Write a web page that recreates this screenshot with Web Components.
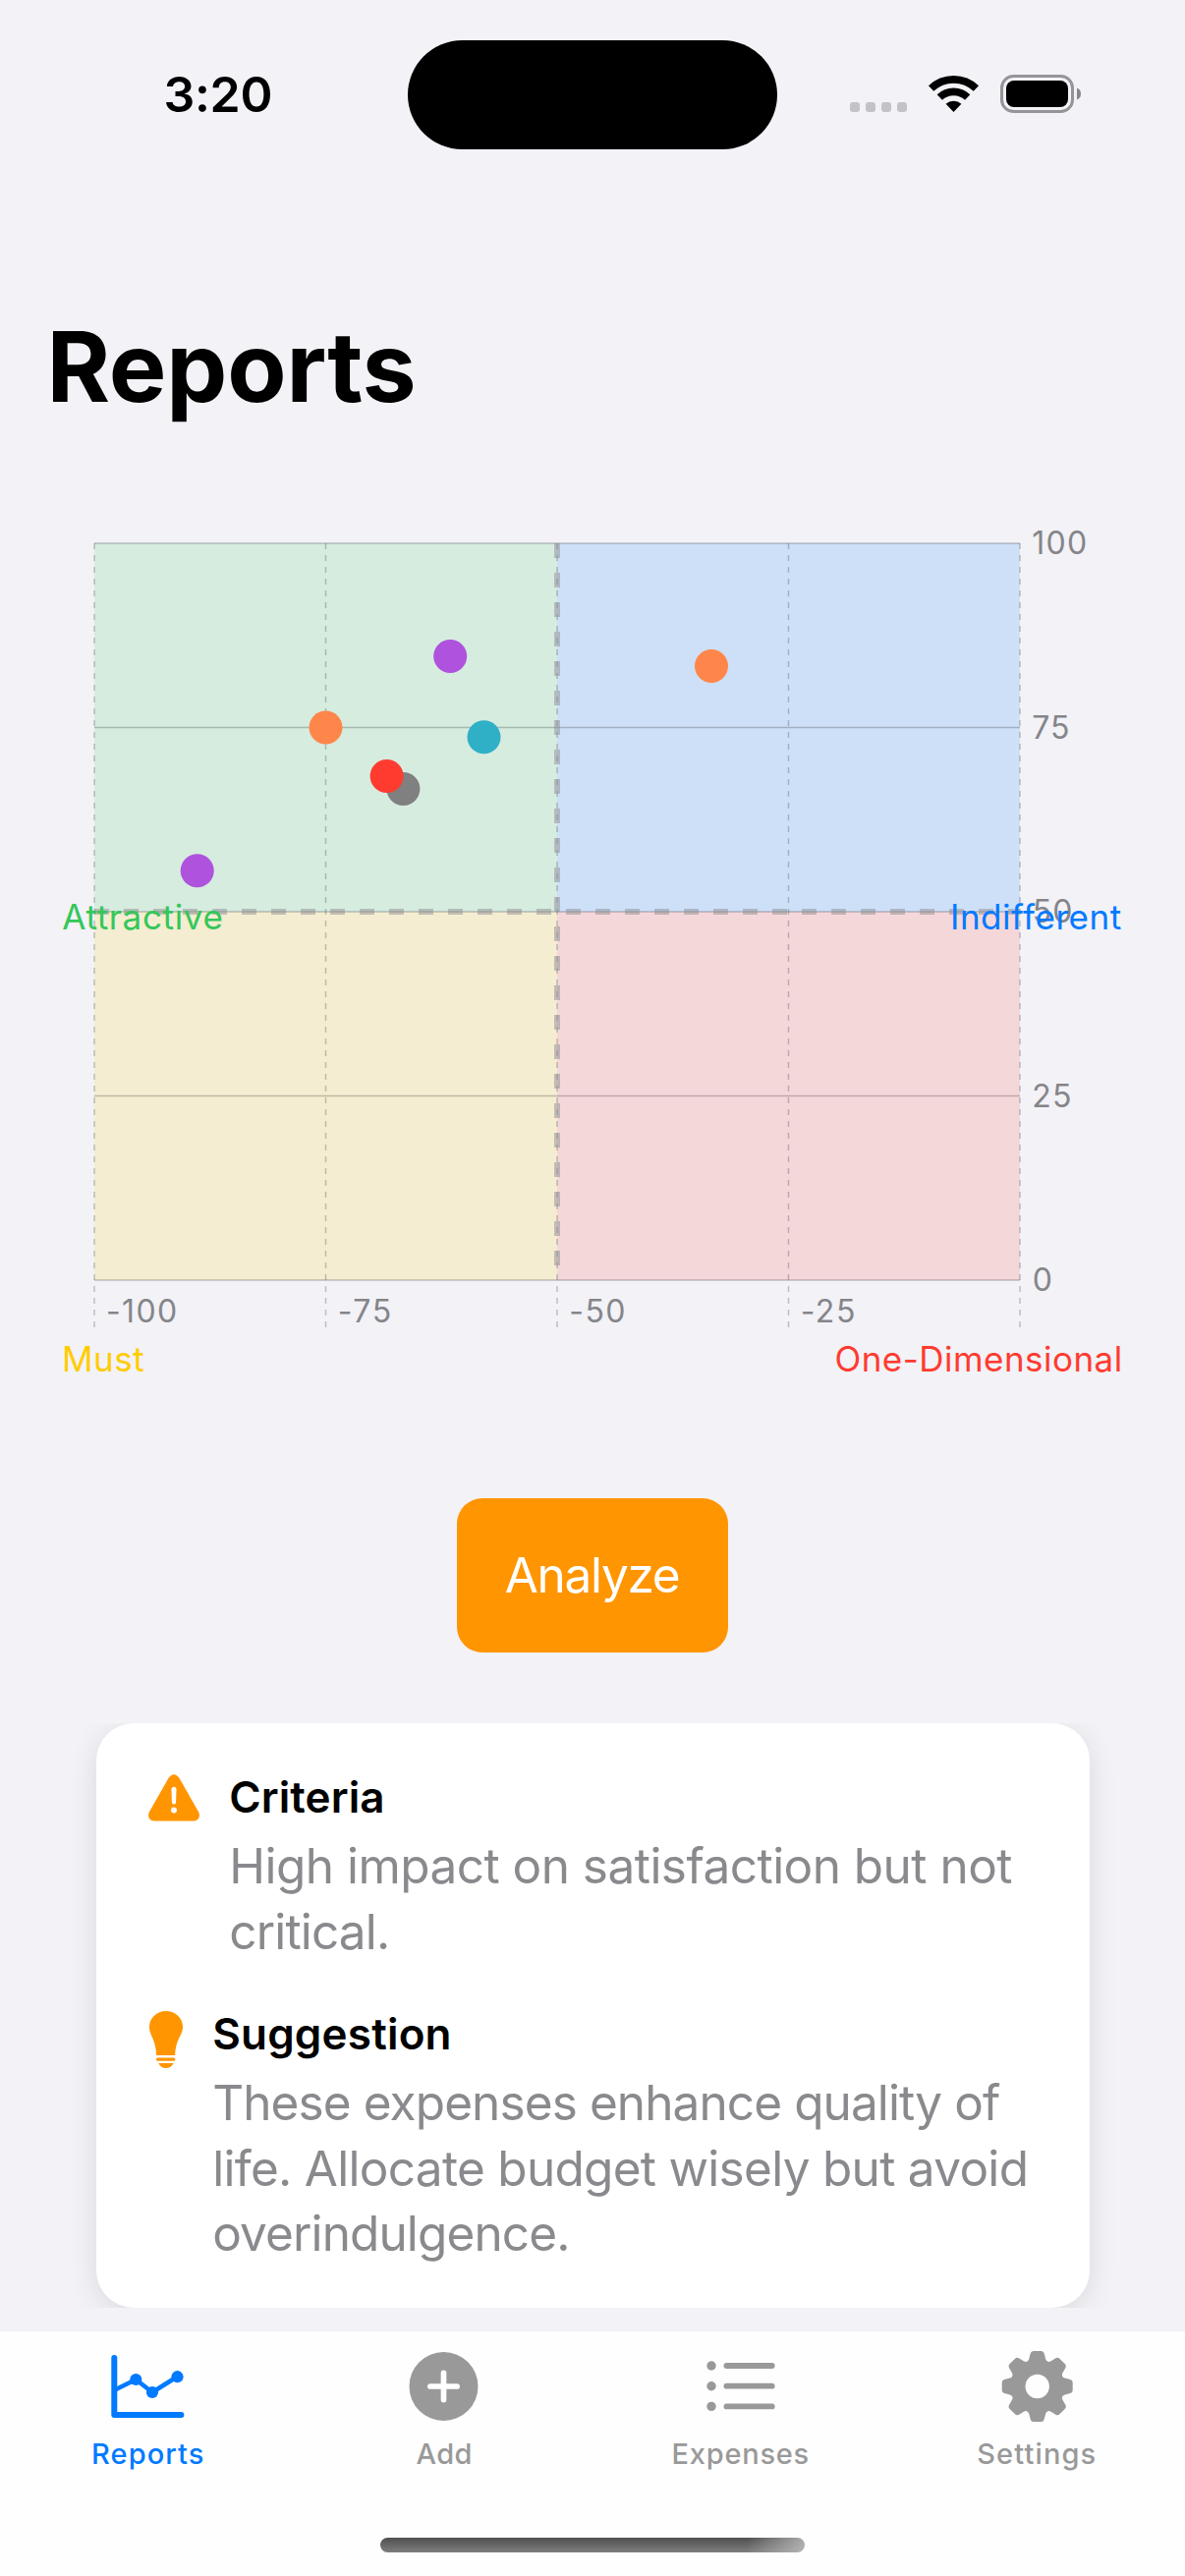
<!DOCTYPE html>
<html lang="en">
<head>
<meta charset="utf-8">
<title>Reports</title>
<style>
  body { margin: 0; background: #f2f2f7; font-family: Inter, "Liberation Sans", sans-serif; color: #000; }
</style>
</head>
<body>
<report-screen></report-screen>
<script>
const define = (name, html) => customElements.define(name, class extends HTMLElement {
  connectedCallback() {
    if (this.shadowRoot) return;
    const t = document.createElement('template');
    t.innerHTML = typeof html === 'function' ? html(this) : html;
    this.attachShadow({ mode: 'open' }).append(t.content.cloneNode(true));
  }
});

define('status-bar', `
<style>
  :host { display: grid; grid-template-columns: 415px 376px 1fr; height: 194px; align-items: center; }
  .time { padding-left: 166.5px; font-size: 50px; font-weight: 600; letter-spacing: -.34px; line-height: 60px; margin-top: -2px; }
  .island { height: 111px; margin-top: -1px; border-radius: 56px; background: #000; }
  svg { display: block; width: 260px; height: 60px; margin-left: 64px; }
</style>
<div class="time">3:20</div>
<div class="island"></div>
<svg viewBox="855 67 260 60">
  <g fill="#c3c2c7">
    <rect x="865" y="104" width="10" height="10" rx="3"/><rect x="881" y="104" width="10" height="10" rx="3"/>
    <rect x="897" y="104" width="10" height="10" rx="3"/><rect x="913" y="104" width="10" height="10" rx="3"/>
  </g>
  <g fill="none" stroke="#000">
    <path stroke-width="7.6" d="M947.6 90a33.2 33.2 0 0 1 45.8 0"/>
    <path stroke-width="7.6" d="M956.3 99.1a20.5 20.5 0 0 1 28.4 0"/>
  </g>
  <path d="M970.5 114l-7.9-8.2a11.6 11.6 0 0 1 15.8 0z"/>
  <rect x="1019.5" y="77.5" width="72" height="36" rx="12" fill="none" stroke="#949499" stroke-width="3"/>
  <rect x="1024" y="82" width="63" height="27" rx="8"/>
  <path fill="#87878b" d="M1096 89.5q4 1.5 4 6t-4 6z"/>
</svg>`);

define('page-title', `
<style>
  :host { display: block; box-sizing: border-box; height: 286px; padding: 120px 0 0 47.5px; font-size: 98.5px; font-weight: 700; line-height: 120px; letter-spacing: -.19px; }
</style><slot></slot>`);

define('kano-chart', () => {
  const xs = [96, 331.5, 567, 802.5, 1038], ys = [553, 740.5, 928, 1115.5, 1303];
  const dots = [[410.4,803,'#808080'],[393.6,790,'#ff3b30'],[458.2,668,'#af52de'],[331.5,740.5,'#ff864a'],[492.5,750.3,'#30b0c7'],[200.7,886.3,'#af52de'],[724,678,'#ff864a']];
  const line = (x1, y1, x2, y2) => `<line x1="${x1}" y1="${y1}" x2="${x2}" y2="${y2}"/>`;
  const text = (s, x, y, ls) => `<text x="${x}" y="${y}" letter-spacing="${ls}">${s}</text>`;
  return `
<style>
  :host { display: block; height: 940px; }
  svg { display: block; }
  text { font-family: Inter, "Liberation Sans", sans-serif; }
</style>
<svg width="1206" height="940" viewBox="0 480 1206 940">
  <rect x="96" y="553" width="471" height="375" fill="#d6ecdf"/>
  <rect x="567" y="553" width="471" height="375" fill="#cee0f8"/>
  <rect x="96" y="928" width="471" height="375" fill="#f4edd1"/>
  <rect x="567" y="928" width="471" height="375" fill="#f4d7d9"/>
  <g stroke="#3c3c43" stroke-opacity=".29" stroke-width="1.5">
    ${ys.map(y => line(96, y, 1038, y)).join('')}
    <g stroke-dasharray="6 6">${xs.map(x => line(x, 553, x, 1351)).join('')}</g>
  </g>
  <g font-size="32" fill="#858589">
    ${text('100', 1050.3, 564, 1.25)}${text('75', 1050.3, 751.8, .9)}${text('50', 1050.8, 939.3, 1.1)}${text('25', 1050.3, 1126.8, 1.1)}${text('0', 1050.8, 1314.2, 0)}
    ${text('-100', 108, 1346, 1.36)}${text('-75', 343.7, 1346, 1.65)}${text('-50', 579.2, 1346, 1.5)}${text('-25', 814.7, 1346, 1.52)}
  </g>
  <g stroke="#8e8e93" stroke-opacity=".5" stroke-width="6" stroke-dasharray="15 15">
    ${line(567, 553, 567, 1303)}${line(96, 928, 1038, 928)}
  </g>
  ${dots.map(([x, y, c]) => `<circle cx="${x}" cy="${y}" r="17" fill="${c}"/>`).join('')}
  <g font-size="35">
    <g fill="#34c759">${text('Attractive', 63.3, 945.7, .66)}</g>
    <g fill="#007aff">${text('Indifferent', 967, 945.7, .51)}</g>
    <g fill="#ffcc00">${text('Must', 63, 1396, .5)}</g>
    <g fill="#ff3b30">${text('One-Dimensional', 849.5, 1396, .46)}</g>
  </g>
</svg>`;
});

define('action-button', `
<style>
  :host { display: block; padding: 105px 0 72px; }
  button { display: block; width: 276px; height: 157px; margin: 0 auto; padding: 0 1px 1px 0; border: 0; border-radius: 26px; background: #ff9500; color: #fff; font: 400 49.5px/60px Inter, "Liberation Sans", sans-serif; letter-spacing: -1.3px; }
</style><button><slot></slot></button>`);

define('advice-card', `
<style>
  :host { display: block; height: 595px; overflow: hidden; }
  .card { box-sizing: border-box; width: 1011px; height: 595px; margin-left: 98px; padding: 48px 0 0 53px; background: #fff; border-radius: 38px; box-shadow: 0 6px 30px rgba(0,0,0,.1); display: flex; flex-direction: column; gap: 44px; }
</style><div class="card"><slot></slot></div>`);

define('advice-row', el => `
<style>
  :host { display: flex; }
  .icon { flex: none; width: ${el.getAttribute('icon-width')}px; padding-top: 3.5px; }
  h3 { margin: 0 0 10px; font-size: 44px; font-weight: 600; line-height: 54px; }
</style>
<div class="icon"><slot name="icon"></slot></div>
<div><h3 style="letter-spacing:${el.getAttribute('tracking')}px">${el.getAttribute('heading')}</h3><slot></slot></div>`);

define('advice-line', el => `
<style>:host { display: block; white-space: nowrap; color: #8a8a8e; font-size: 49.5px; line-height: 66.5px; letter-spacing: ${el.getAttribute('tracking')}px; }</style><slot></slot>`);

const glyphs = {
  warning: [52, 48, `<path fill="#ff9500" d="M20.7 3.5Q26 -3.5 31.3 3.5L51.2 38.5C53.2 43 50.8 47.5 46 47.5H6C1.2 47.5-1.2 43 .8 38.5Z"/><path fill="#fff" d="M23.5 15.3a2.5 2.5 0 0 1 5 0l-.4 13.2a2.1 2.1 0 0 1-4.2 0z"/><circle cx="26" cy="36.5" r="3" fill="#fff"/>`],
  bulb: [36, 58, `<g transform="translate(1 0)" fill="#ff9500"><path d="M17 0C7.5 0 0 7 0 16C0 25 6.5 28 7.2 45H26.2C26.9 28 34 25 34 16C34 7 26.5 0 17 0Z"/><rect x="7" y="47.5" width="19.3" height="3.2" rx="1.5"/><path d="M9.3 53H24.5Q22.5 58 16.9 58T9.3 53Z"/></g>`],
  chart: [90, 80, `<g fill="none" stroke="currentColor" stroke-linecap="round" stroke-linejoin="round"><path stroke-width="6" d="M-34.7 -29V29H33.4"/><path stroke-width="4.5" d="M-34 3.5L-12.7 -7L4 6L29.5 -10"/></g><g fill="currentColor"><circle cx="-12.7" cy="-7" r="6.1"/><circle cx="4" cy="6" r="6.1"/><circle cx="29.5" cy="-9.8" r="6.1"/></g>`],
  plus: [90, 80, `<g transform="translate(-.5 0)"><circle r="35" fill="currentColor"/><path stroke="#fff" stroke-width="5.7" stroke-linecap="round" d="M-13.6 0H13.6M0-13.6V13.6"/></g>`],
  list: [90, 80, `<g fill="currentColor"><circle cx="-30" cy="-21" r="4.7"/><circle cx="-30" cy="-.3" r="4.7"/><circle cx="-30" cy="20.4" r="4.7"/></g><path stroke="currentColor" stroke-width="5.8" stroke-linecap="round" d="M-14.6-21H31.7M-14.6-.3H31.7M-14.6 20.4H31.7"/>`],
  gear: [90, 80, `<g transform="translate(.7 0)"><g fill="currentColor">${[0,45,90,135,180,225,270,315].map(a => `<path transform="rotate(${a})" d="M-11.5-24.5Q-8.8-26-8.4-28L-7-33.5Q-6.4-36-4-36H4Q6.4-36 7-33.5L8.4-28Q8.8-26 11.5-24.5L8-18H-8Z"/>`).join('')}</g><circle r="19.2" fill="none" stroke="currentColor" stroke-width="14"/></g>`]
};

define('ui-glyph', el => {
  const [w, h, body] = glyphs[el.getAttribute('name')];
  const box = w === 90 ? '-45 -40 90 80' : `0 0 ${w} ${h}`;
  return `<style>:host { display: block; width: ${w}px; height: ${h}px; } svg { display: block; overflow: visible; }</style>
<svg width="${w}" height="${h}" viewBox="${box}">${body}</svg>`;
});

define('tab-item', el => `
<style>
  :host { display: flex; flex: 1; flex-direction: column; align-items: center; gap: 10.5px; color: #999; }
  :host([selected]) { color: #007aff; }
  span { font-size: 29px; font-weight: 500; line-height: 36px; letter-spacing: ${el.getAttribute('tracking')}px; }
</style>
<ui-glyph name="${el.getAttribute('glyph')}"></ui-glyph><span><slot></slot></span>`);

define('tab-bar', `
<style>
  :host { display: block; margin-top: 24px; height: 249px; background: #fefefe; }
  nav { display: flex; box-sizing: border-box; height: 210px; padding-top: 16px; }
  .home { width: 432px; height: 15px; margin: 0 auto; border-radius: 8px;
    background: linear-gradient(100deg, transparent 86%, rgba(190,190,190,.85)), linear-gradient(#4f4f4f, #7e7e7e); }
</style>
<nav><slot></slot></nav><div class="home"></div>`);

define('report-screen', `
<style>:host { display: block; width: 1206px; height: 2622px; overflow: hidden; }</style>
<status-bar></status-bar>
<page-title>Reports</page-title>
<kano-chart></kano-chart>
<action-button>Analyze</action-button>
<advice-card>
  <advice-row heading="Criteria" icon-width="82.3" tracking=".08">
    <ui-glyph slot="icon" name="warning"></ui-glyph>
    <advice-line tracking="-.53">High impact on satisfaction but not</advice-line>
    <advice-line tracking="-.85">critical.</advice-line>
  </advice-row>
  <advice-row heading="Suggestion" icon-width="65.2" tracking=".2">
    <ui-glyph slot="icon" name="bulb"></ui-glyph>
    <advice-line tracking="-.9">These expenses enhance quality of</advice-line>
    <advice-line tracking="-.71">life. Allocate budget wisely but avoid</advice-line>
    <advice-line tracking="-.87">overindulgence.</advice-line>
  </advice-row>
</advice-card>
<tab-bar>
  <tab-item selected glyph="chart" tracking="1.08">Reports</tab-item>
  <tab-item glyph="plus" tracking=".37">Add</tab-item>
  <tab-item glyph="list" tracking=".76">Expenses</tab-item>
  <tab-item glyph="gear" tracking="1.15">Settings</tab-item>
</tab-bar>`);
</script>
</body>
</html>
